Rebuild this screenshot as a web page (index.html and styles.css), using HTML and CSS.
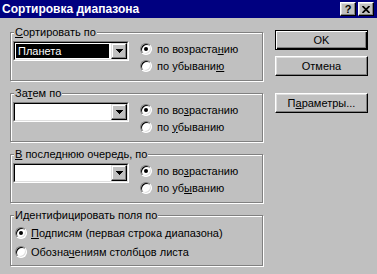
FILE: index.html
```html
<!DOCTYPE html>
<html lang="ru">
<head>
    <meta charset="UTF-8">
    <meta name="viewport" content="width=device-width, initial-scale=1.0">
    <title>Сортировка диапазона</title>
    <link rel="stylesheet" href="styles.css">
</head>
<body>

    <div class="titlebar">
        <span class="title">Сортировка диапазона</span>
        <div class="title-buttons">
            <span class="tbtn">?</span>
            <span class="tbtn">
                <svg width="8" height="7" viewBox="0 0 8 7"><path d="M0.5 0 L7.5 7 M7.5 0 L0.5 7" stroke="#000" stroke-width="1.7"/></svg>
            </span>
        </div>
    </div>

    <div class="main">
        <div class="groups">
            <fieldset class="group">
                <legend><u>С</u>ортировать по</legend>
                <div class="row">
                    <div class="combo">
                        <div class="combo-inner">
                            <span class="field"><span class="value">Планета</span></span>
                            <span class="drop"><svg width="7" height="4" viewBox="0 0 7 4"><path d="M0 0h7v1h-1v1h-1v1h-1v1h-1v-1h-1v-1h-1v-1h-1z" fill="#000"/></svg></span>
                        </div>
                    </div>
                    <div class="radios">
                        <div class="radio-item"><span class="radio checked"></span><span>по возраста<u>н</u>ию</span></div>
                        <div class="radio-item"><span class="radio"></span><span>по убывани<u>ю</u></span></div>
                    </div>
                </div>
            </fieldset>

            <fieldset class="group">
                <legend>За<u>т</u>ем по</legend>
                <div class="row">
                    <div class="combo">
                        <div class="combo-inner">
                            <span class="field"></span>
                            <span class="drop"><svg width="7" height="4" viewBox="0 0 7 4"><path d="M0 0h7v1h-1v1h-1v1h-1v1h-1v-1h-1v-1h-1v-1h-1z" fill="#000"/></svg></span>
                        </div>
                    </div>
                    <div class="radios">
                        <div class="radio-item"><span class="radio checked"></span><span>по во<u>з</u>растанию</span></div>
                        <div class="radio-item"><span class="radio"></span><span>по <u>у</u>быванию</span></div>
                    </div>
                </div>
            </fieldset>

            <fieldset class="group">
                <legend><u>В</u> последнюю очередь, по</legend>
                <div class="row">
                    <div class="combo">
                        <div class="combo-inner">
                            <span class="field"></span>
                            <span class="drop"><svg width="7" height="4" viewBox="0 0 7 4"><path d="M0 0h7v1h-1v1h-1v1h-1v1h-1v-1h-1v-1h-1v-1h-1z" fill="#000"/></svg></span>
                        </div>
                    </div>
                    <div class="radios">
                        <div class="radio-item"><span class="radio checked"></span><span>по во<u>з</u>растанию</span></div>
                        <div class="radio-item"><span class="radio"></span><span>по уб<u>ы</u>ванию</span></div>
                    </div>
                </div>
            </fieldset>

            <fieldset class="group group-ident">
                <legend>Идентифицировать поля по</legend>
                <div class="radios">
                    <div class="radio-item"><span class="radio checked"></span><span><u>П</u>одписям (первая строка диапазона)</span></div>
                    <div class="radio-item"><span class="radio"></span><span>Обозна<u>ч</u>ениям столбцов листа</span></div>
                </div>
            </fieldset>
        </div>

        <div class="buttons">
            <button class="btn default">OK</button>
            <button class="btn">Отмена</button>
            <button class="btn params">П<u>а</u>раметры...</button>
        </div>
    </div>

</body>
</html>
```

FILE: styles.css
```css
* {
    margin: 0;
    padding: 0;
    box-sizing: border-box;
    font-family: "Liberation Sans", Arial, sans-serif;
}

body {
    background-color: #c0c0c0;
    color: #000;
    font-size: 11px;
    width: 377px;
    height: 274px;
    overflow: hidden;
}

u {
    text-decoration: underline;
    text-underline-offset: 1px;
}

/* title bar */
.titlebar {
    height: 18px;
    background-color: #000080;
    color: #fff;
    display: flex;
    align-items: center;
    justify-content: space-between;
    padding: 0 3px 0 2px;
}

.title {
    font-size: 12px;
    font-weight: bold;
}

.title-buttons {
    display: flex;
    gap: 2px;
}

.tbtn {
    width: 16px;
    height: 14px;
    display: flex;
    align-items: center;
    justify-content: center;
    background-color: #c0c0c0;
    color: #000;
    font-size: 11px;
    font-weight: bold;
    border: 1px solid;
    border-color: #fff #000 #000 #fff;
    box-shadow: inset -1px -1px #808080, inset 1px 1px #dfdfdf;
}

/* dialog body */
.main {
    display: flex;
    gap: 12px;
    padding: 8px 0 0 10px;
}

.groups {
    width: 253px;
    display: flex;
    flex-direction: column;
    gap: 6px;
}

.group {
    border: 1px solid #808080;
    box-shadow: inset 1px 1px #fff, 1px 1px #fff;
    padding: 1px 2px 6px 2px;
    min-width: 0;
}

.group legend {
    margin-left: 1px;
    padding: 0 1px;
    line-height: 13px;
    background-color: #c0c0c0;
}

.row {
    display: flex;
    align-items: flex-start;
}

.combo {
    width: 116px;
    height: 20px;
    margin-top: 1px;
    border: 1px solid;
    border-color: #808080 #fff #fff #808080;
}

.combo-inner {
    height: 100%;
    display: flex;
    background-color: #fff;
    border: 1px solid;
    border-color: #000 #dfdfdf #dfdfdf #000;
}

.field {
    flex: 1;
    padding: 1px 2px 1px 1px;
}

.value {
    display: block;
    height: 100%;
    background-color: #000;
    color: #fff;
    padding-left: 2px;
    line-height: 14px;
}

.drop {
    width: 16px;
    display: flex;
    align-items: center;
    justify-content: center;
    background-color: #c0c0c0;
    border: 1px solid;
    border-color: #dfdfdf #000 #000 #dfdfdf;
    box-shadow: inset -1px -1px #808080, inset 1px 1px #fff;
}

.radios {
    margin-left: 11px;
    display: flex;
    flex-direction: column;
}

.radio-item {
    height: 17px;
    display: flex;
    align-items: center;
    gap: 5px;
    white-space: nowrap;
}

.radio {
    position: relative;
    flex: none;
    width: 12px;
    height: 12px;
    border-radius: 50%;
    background-color: #fff;
    border: 1px solid;
    border-color: #808080 #fff #fff #808080;
    box-shadow: inset 1px 1px #000, inset -1px -1px #dfdfdf;
}

.radio.checked::after {
    content: "";
    position: absolute;
    left: 3px;
    top: 3px;
    width: 4px;
    height: 4px;
    border-radius: 50%;
    background-color: #000;
}

.group-ident {
    padding-bottom: 4px;
}

.group-ident .radios {
    margin-left: 2px;
}

.group-ident .radio-item {
    height: 19px;
    gap: 4px;
}

/* push buttons */
.buttons {
    display: flex;
    flex-direction: column;
    margin-top: 4px;
}

.btn {
    width: 93px;
    height: 20px;
    font-size: 11px;
    font-weight: normal;
    color: #000;
    background-color: #c0c0c0;
    border: 1px solid;
    border-color: #fff #000 #000 #fff;
    box-shadow: inset -1px -1px #808080, inset 1px 1px #dfdfdf;
}

.btn + .btn {
    margin-top: 6px;
}

.btn.default {
    border-color: #000;
    box-shadow: inset 1px 1px #fff, inset -1px -1px #000, inset -2px -2px #808080;
}

.btn.params {
    margin-top: 17px;
}
```
